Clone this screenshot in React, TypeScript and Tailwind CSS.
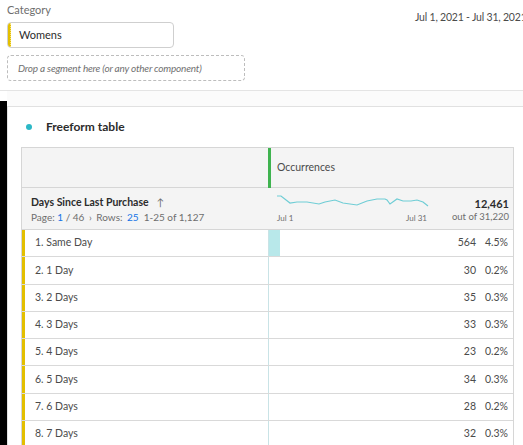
import React from 'react';

const rows = [
  { label: '1. Same Day', value: '564', pct: '4.5%', bar: 11 },
  { label: '2. 1 Day', value: '30', pct: '0.2%', bar: 0 },
  { label: '3. 2 Days', value: '35', pct: '0.3%', bar: 0 },
  { label: '4. 3 Days', value: '33', pct: '0.3%', bar: 0 },
  { label: '5. 4 Days', value: '23', pct: '0.2%', bar: 0 },
  { label: '6. 5 Days', value: '34', pct: '0.3%', bar: 0 },
  { label: '7. 6 Days', value: '28', pct: '0.2%', bar: 0 },
  { label: '8. 7 Days', value: '32', pct: '0.3%', bar: 0 },
];

function Sparkline() {
  return (
    <svg width="152" height="14" viewBox="0 0 152 14" className="block">
      <polyline
        fill="none"
        stroke="#6fcdd5"
        strokeWidth="1.2"
        points="0,1 4,1 13,8 20,7 30,7 42,9 48,7 58,5 66,8 80,10 90,6 100,4 108,4 110,5 113,9 120,4 126,6 134,6 140,5 146,7 151,11"
      />
    </svg>
  );
}

export default function App() {
  return (
    <div className="w-[523px] h-[445px] overflow-hidden bg-white font-['Lato',sans-serif] text-[#4b4b4b]">
      {/* filter bar */}
      <div className="h-[91px] flex border-b border-[#e4e4e4]">
        <div className="w-[421px] shrink-0 pl-[7px] pt-[3px]">
          <div className="text-[11px] leading-[14px] text-[#6e6e6e]">Category</div>
          <div className="mt-[5px] w-[167px] h-[26px] flex items-center border border-[#cfcfcf] rounded-[4px] overflow-hidden">
            <div className="w-[3px] self-stretch bg-[#e3bf00] border-r border-dotted border-[#f5e27a]" />
            <span className="ml-[8px] text-[11px] text-[#2c2c2c]">Womens</span>
          </div>
          <div className="mt-[7px] w-[238px] h-[26px] flex items-center border border-dashed border-[#bdbdbd] rounded-[4px] pl-[10px]">
            <span className="text-[10px] tracking-[-0.2px] italic text-[#707070] whitespace-nowrap">Drop a segment here (or any other component)</span>
          </div>
        </div>
        <div className="shrink-0 -ml-[6px] pt-[10px] text-[10.5px] tracking-[-0.2px] text-[#4b4b4b] whitespace-nowrap">Jul 1, 2021 - Jul 31, 2021</div>
      </div>

      {/* workspace */}
      <div className="flex h-[354px]">
        <div className="w-[7px] shrink-0 mt-[10px] bg-black" />
        <div className="flex-1 pt-[15px] bg-[#fbfbfb]">
          <div className="h-full bg-white border-t border-l border-[#e1e1e1] pl-[13px] pr-[9px]">
            <div className="h-[40px] flex items-center">
              <span className="ml-[5px] w-[6px] h-[6px] rounded-full bg-[#2cb8c6]" />
              <span className="ml-[14px] text-[12px] font-bold text-[#2c2c2c]">Freeform table</span>
            </div>

            <div className="border border-[#d6d6d6] border-b-0">
              {/* header row 1 */}
              <div className="flex h-[40px] bg-[#f4f4f4] border-b border-[#d6d6d6]">
                <div className="w-[246px] shrink-0" />
                <div className="flex items-center">
                  <div className="w-[3px] h-[40px] bg-[#3fb34f]" />
                  <span className="ml-[6px] text-[10.5px] text-[#4b4b4b]">Occurrences</span>
                </div>
              </div>
              {/* header row 2 */}
              <div className="flex h-[42px] bg-[#f4f4f4] border-b border-[#d6d6d6]">
                <div className="w-[246px] shrink-0 pl-[9px] pt-[7px]">
                  <div className="flex items-center text-[10.5px] leading-[14px] font-bold text-[#2c2c2c]">
                    Days Since Last Purchase
                    <span className="ml-[8px] font-normal text-[#6e6e6e] text-[10px]">↑</span>
                  </div>
                  <div className="mt-[1px] text-[10px] leading-[14px] text-[#6e6e6e] whitespace-nowrap">
                    Page: <span className="text-[#1473e6]">1</span> / 46 <span className="mx-[2px]">›</span> Rows: <span className="ml-[2px] text-[#1473e6]">25</span>
                    <span className="ml-[5px]">1-25 of 1,127</span>
                  </div>
                </div>
                <div className="flex-1 flex">
                  <div className="pl-[9px] pt-[7px]">
                    <Sparkline />
                    <div className="w-[152px] flex justify-between text-[8px] leading-[10px] text-[#6e6e6e] mt-[4px]">
                      <span>Jul 1</span>
                      <span className="mr-[2px]">Jul 31</span>
                    </div>
                  </div>
                  <div className="flex-1 pr-[4px] pt-[9px] text-right">
                    <div className="text-[11px] leading-[13px] font-bold text-[#2c2c2c]">12,461</div>
                    <div className="text-[9.5px] leading-[13px] text-[#6e6e6e]">out of 31,220</div>
                  </div>
                </div>
              </div>

              {rows.map((r) => (
                <div key={r.label} className="flex h-[27.3px] border-b border-[#d9d9d9]">
                  <div className="w-[246px] shrink-0 flex items-center">
                    <div className="w-[3px] self-stretch bg-[#e3bf00]" />
                    <span className="ml-[10px] text-[10.5px] text-[#4b4b4b]">{r.label}</span>
                  </div>
                  <div className="flex-1 flex items-center border-l border-[#c9e3e6] relative">
                    {r.bar > 0 && <div className="absolute left-0 top-0 bottom-0 w-[11px] bg-[#b8e8ea]" />}
                    <div className="flex-1 flex justify-end items-center text-[10.5px] pr-[5px]">
                      <span>{r.value}</span>
                      <span className="w-[32px] text-right">{r.pct}</span>
                    </div>
                  </div>
                </div>
              ))}
            </div>
          </div>
        </div>
      </div>
    </div>
  );
}
